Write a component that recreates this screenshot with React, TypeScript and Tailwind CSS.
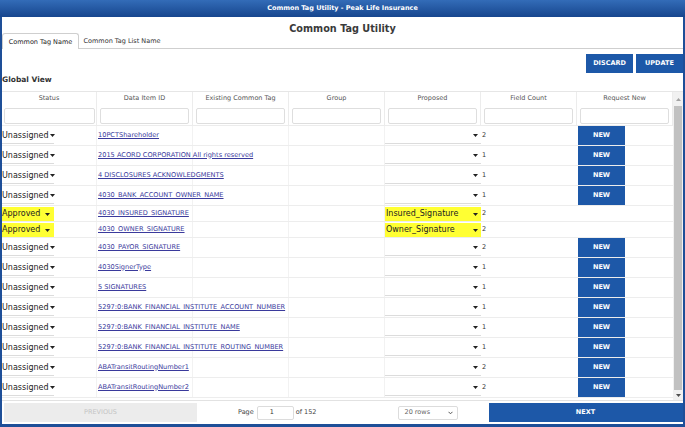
import React from "react";

type Row = { id: string; count: number; approved?: string };

const rows: Row[] = [
  { id: "10PCTShareholder", count: 2 },
  { id: "2015 ACORD CORPORATION All rights reserved", count: 1 },
  { id: "4 DISCLOSURES ACKNOWLEDGMENTS", count: 1 },
  { id: "4030_BANK_ACCOUNT_OWNER_NAME", count: 1 },
  { id: "4030_INSURED_SIGNATURE", count: 2, approved: "Insured_Signature" },
  { id: "4030_OWNER_SIGNATURE", count: 2, approved: "Owner_Signature" },
  { id: "4030_PAYOR_SIGNATURE", count: 2 },
  { id: "4030SignerType", count: 1 },
  { id: "5 SIGNATURES", count: 1 },
  { id: "5297:0:BANK_FINANCIAL_INSTITUTE_ACCOUNT_NUMBER", count: 1 },
  { id: "5297:0:BANK_FINANCIAL_INSTITUTE_NAME", count: 1 },
  { id: "5297:0:BANK_FINANCIAL_INSTITUTE_ROUTING_NUMBER", count: 1 },
  { id: "ABATransitRoutingNumber1", count: 2 },
  { id: "ABATransitRoutingNumber2", count: 2 },
];

const headers = [
  "Status",
  "Data Item ID",
  "Existing Common Tag",
  "Group",
  "Proposed",
  "Field Count",
  "Request New",
];

function Caret() {
  return (
    <svg width="5" height="3" viewBox="0 0 5 3" className="block shrink-0">
      <path d="M0 0 L5 0 L2.5 3 Z" fill="#222" />
    </svg>
  );
}

const grid = "grid grid-cols-[95px_96px_96px_96px_96px_96px_96px]";

export default function App() {
  return (
    <div className="w-[685px] h-[427px] bg-[#1e4f98] flex flex-col overflow-hidden font-['DejaVu_Sans',sans-serif]">
      {/* title bar */}
      <div className="h-[17px] shrink-0 bg-gradient-to-b from-[#336cb8] to-[#17468e] flex items-center justify-center text-white text-[6.5px] font-bold">
        Common Tag Utility - Peak Life Insurance
      </div>

      <div className="flex-1 ml-[2px] mr-[2px] mb-[3px] bg-white flex flex-col min-h-0">
        {/* heading */}
        <div className="h-[16px] shrink-0 pt-[7px] text-center text-[9.7px] leading-[10px] font-bold text-[#3a3a3a]">
          Common Tag Utility
        </div>

        {/* tabs */}
        <div className="h-[16px] shrink-0 flex items-end border-b border-[#cfcfcf]">
          <div className="h-[16px] w-[77px] -mb-px bg-white border border-b-0 border-[#cfcfcf] rounded-t-[3px] flex items-center justify-center pt-[3px] text-[6.5px] text-[#222]">
            Common Tag Name
          </div>
          <div className="h-[16px] w-[86px] flex items-center justify-center pt-[3px] text-[6.5px] text-[#333]">
            Common Tag List Name
          </div>
        </div>

        {/* action buttons */}
        <div className="mt-[5px] h-[19px] shrink-0 flex justify-end gap-[3px]">
          <button className="block w-[47px] h-[19px] bg-[#1d58a8] text-white text-[6.5px] font-bold">
            DISCARD
          </button>
          <button className="block w-[47px] h-[19px] bg-[#1d58a8] text-white text-[6.5px] font-bold">
            UPDATE
          </button>
        </div>

        {/* global view */}
        <div className="h-[12px] mt-[1px] shrink-0 flex items-center text-[7.5px] font-bold text-[#333]">
          Global View
        </div>

        {/* table */}
        <div className="mt-[5px] flex-1 min-h-0 flex border-t border-[#e6e6e6]">
          <div className="w-[671px] flex flex-col overflow-hidden">
            <div className={`${grid} h-[14px] shrink-0`}>
              {headers.map((h) => (
                <div
                  key={h}
                  className="flex items-center justify-center text-[6.5px] text-[#555] border-r border-[#ececec]"
                >
                  {h}
                </div>
              ))}
            </div>
            <div className={`${grid} h-[20px] shrink-0 border-b border-[#ececec]`}>
              {headers.map((h, i) => (
                <div
                  key={h}
                  className={`pt-[2px] border-r border-[#ececec] ${i === 0 ? "pl-[2px] pr-[1px]" : "px-[3px]"}`}
                >
                  <div className="h-[16px] border border-[#dedede] rounded-[2px] bg-white" />
                </div>
              ))}
            </div>

            {rows.map((r) => (
              <div
                key={r.id}
                className={`${grid} shrink-0 border-b border-[#ededed] ${r.approved ? "h-[16px]" : "h-[20px]"}`}
              >
                {/* status */}
                <div className="border-r border-[#f2f2f2]">
                  {r.approved ? (
                    <div className="w-[52px] h-[14px] mt-[1px] bg-[#ffff33] flex items-center justify-between pr-[4px]">
                      <span className="text-[8px] text-[#222]">Approved</span>
                      <Caret />
                    </div>
                  ) : (
                    <div className="w-[52px] h-[16px] mt-[2px] border-b border-[#dcdcdc] flex items-center">
                      <span className="text-[8px] text-[#222]">Unassigned</span>
                      <span className="ml-[1px]">
                        <Caret />
                      </span>
                    </div>
                  )}
                </div>
                {/* data item id */}
                <div className="relative z-10 pl-[1px] flex items-center border-r border-[#f2f2f2] whitespace-nowrap">
                  <span className="text-[6.6px] text-[#3a3a9c] underline">{r.id}</span>
                </div>
                <div className="border-r border-[#f2f2f2]" />
                <div className="border-r border-[#f2f2f2]" />
                {/* proposed */}
                <div>
                  {r.approved ? (
                    <div className="h-[14px] mt-[1px] bg-[#ffff33] flex items-center justify-between pl-[1px] pr-[3px]">
                      <span className="text-[8px] text-[#222]">{r.approved}</span>
                      <Caret />
                    </div>
                  ) : (
                    <div className="h-[16px] mt-[2px] border-b border-[#dcdcdc] flex items-center justify-end pr-[3px]">
                      <Caret />
                    </div>
                  )}
                </div>
                {/* field count */}
                <div className="pl-[1px] flex items-center text-[6.5px] text-[#333]">
                  {r.count}
                </div>
                {/* request new */}
                <div className="pl-[1px]">
                  {!r.approved && (
                    <button className="block w-[47px] h-[19px] bg-[#1d58a8] text-white text-[6.5px] font-bold">
                      NEW
                    </button>
                  )}
                </div>
              </div>
            ))}
          </div>

          {/* scrollbar */}
          <div className="w-[10px] bg-[#f1f1f1] flex flex-col items-center">
            <div className="h-[14px] flex items-center justify-center">
              <svg width="5" height="3" viewBox="0 0 5 3">
                <path d="M0 3 L5 3 L2.5 0 Z" fill="#a3a3a3" />
              </svg>
            </div>
            <div className="w-[8px] flex-1 bg-[#c1c1c1]" />
            <div className="h-[10px] flex items-center justify-center">
              <svg width="5" height="3" viewBox="0 0 5 3">
                <path d="M0 0 L5 0 L2.5 3 Z" fill="#505050" />
              </svg>
            </div>
          </div>
        </div>

        {/* footer */}
        <div className="h-[24px] shrink-0 border-t border-[#e2e2e2] flex items-center">
          <button className="block ml-[2px] w-[193px] h-[19px] bg-[#ececec] text-[6.5px] text-[#c4c4c4]">
            PREVIOUS
          </button>
          <span className="ml-[41px] text-[6.5px] text-[#444]">Page</span>
          <div className="ml-[3px] w-[37px] h-[14px] border border-[#dcdcdc] rounded-[2px] flex items-center pl-[12px] text-[6.5px] text-[#333]">
            1
          </div>
          <span className="ml-[2px] text-[6.5px] text-[#444]">of 152</span>
          <div className="ml-[81px] w-[60px] h-[14px] border border-[#dcdcdc] rounded-[2px] flex items-center justify-between pl-[6px] pr-[4px] text-[6.5px] text-[#666]">
            <span>20 rows</span>
            <svg width="5" height="4" viewBox="0 0 5 4">
              <path d="M0.5 0.8 L2.5 2.8 L4.5 0.8" stroke="#555" strokeWidth="1" fill="none" />
            </svg>
          </div>
          <button className="block ml-[31px] w-[194px] h-[19px] bg-[#1d58a8] text-white text-[6.5px] font-bold">
            NEXT
          </button>
        </div>
      </div>
    </div>
  );
}
